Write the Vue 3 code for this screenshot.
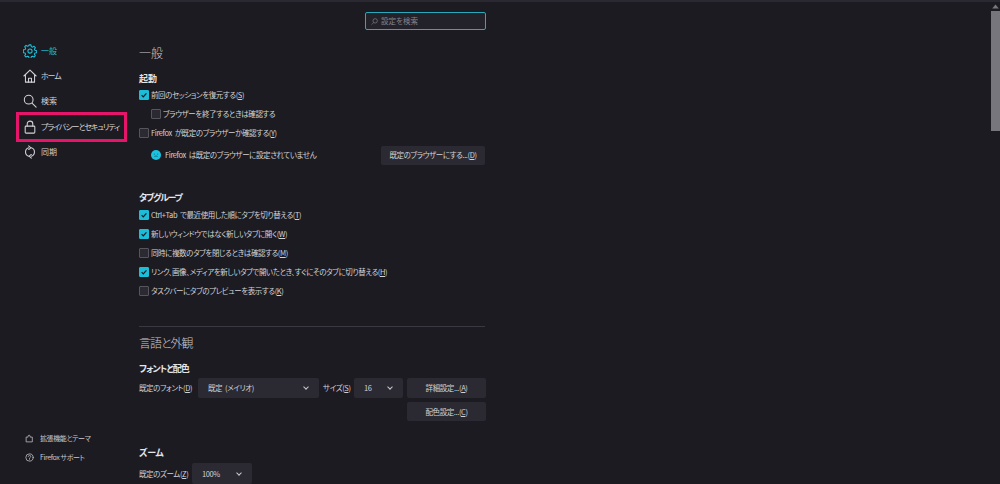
<script setup>
const navItems = [
  { id: 'gear', label: '一般', active: true },
  { id: 'home', label: 'ホーム', tight: true },
  { id: 'search', label: '検索' },
  { id: 'lock', label: 'プライバシーとセキュリティ', boxed: true, tight: true },
  { id: 'sync', label: '同期' }
]
const startup = [
  { label: '前回のセッションを復元する', key: 'S', checked: true },
  { label: 'ブラウザーを終了するときは確認する', checked: false, indent: true },
  { label: 'Firefox が既定のブラウザーか確認する', key: 'Y', checked: false }
]
const tabs = [
  { label: 'Ctrl+Tab で最近使用した順にタブを切り替える', key: 'T', checked: true },
  { label: '新しいウィンドウではなく新しいタブに開く', key: 'W', checked: true },
  { label: '同時に複数のタブを閉じるときは確認する', key: 'M', checked: false },
  { label: 'リンク、画像、メディアを新しいタブで開いたとき、すぐにそのタブに切り替える', key: 'H', checked: true },
  { label: 'タスクバーにタブのプレビューを表示する', key: 'K', checked: false }
]
</script>

<template>
  <div class="page">
    <div class="topstrip"></div>
    <div class="body">
      <aside class="side">
        <nav class="nav">
          <div v-for="n in navItems" :key="n.id" class="nav-item" :class="{ active: n.active, boxed: n.boxed, tight: n.tight }">
            <svg class="nav-icon" viewBox="0 0 16 16" fill="none" stroke="currentColor" stroke-width="1.2" stroke-linecap="round" stroke-linejoin="round">
              <template v-if="n.id === 'gear'">
                <circle cx="8" cy="8" r="2.4" />
                <path d="M6.9 1h2.2l.4 2 1.3.6 1.8-1 1.5 1.6-1.1 1.7.6 1.3 2 .5v2.2l-2 .5-.6 1.3 1.1 1.7-1.5 1.5-1.8-1-1.3.6-.4 2H6.900l-.4-2-1.300-.6-1.800 1-1.500-1.500 1.100-1.700-.6-1.300-2-.5V6.700l2-.5.6-1.300-1.100-1.700 1.500-1.600 1.800 1 1.300-.6z" />
              </template>
              <template v-else-if="n.id === 'home'">
                <path d="M1 8 8 1.200 15 8M2.800 6.500V15h10.400V6.500" />
                <path d="M6.300 15v-4.500h3.400V15" />
              </template>
              <template v-else-if="n.id === 'search'">
                <circle cx="6.500" cy="6.500" r="5" />
                <path d="m10.300 10.300 4.700 4.700" />
              </template>
              <template v-else-if="n.id === 'lock'">
                <rect x="2.500" y="7" width="11" height="8" rx="1" />
                <path d="M4.800 7V4.500a3.200 3.200 0 0 1 6.400 0V7" />
              </template>
              <template v-else>
                <path d="M9.500 3.200a5 5 0 0 1 0 9.600M6.500 12.800a5 5 0 0 1 0-9.600" />
                <path d="M6.500 1 9 3.200 6.500 5.200M9.500 10.800 7 12.800 9.500 15" />
              </template>
            </svg>
            <span class="nav-label">{{ n.label }}</span>
          </div>
        </nav>
        <div class="side-foot">
          <div class="foot-item">
            <svg class="foot-icon" viewBox="0 0 16 16" fill="none" stroke="currentColor" stroke-width="1.300" stroke-linejoin="round">
              <path d="M2 5.500h3.500V4a1.800 1.800 0 0 1 3.600 0v1.500H13V14H2z" />
            </svg>
            <span>拡張機能とテーマ</span>
          </div>
          <div class="foot-item">
            <svg class="foot-icon" viewBox="0 0 16 16" fill="none" stroke="currentColor" stroke-width="1.300" stroke-linecap="round">
              <circle cx="8" cy="8" r="6.500" />
              <path d="M5.800 6.200a2.200 2.200 0 1 1 3.400 1.800c-.8.500-1.200 1-1.200 1.800M8 12v.1" />
            </svg>
            <span>Firefox サポート</span>
          </div>
        </div>
      </aside>

      <main class="main">
        <div class="search-row">
          <div class="search">
            <svg class="search-icon" viewBox="0 0 16 16" fill="none" stroke="currentColor" stroke-width="1.500">
              <circle cx="9.500" cy="6.500" r="5" />
              <path d="M6 10.500 1.500 15" />
            </svg>
            <span>設定を検索</span>
          </div>
        </div>

        <h1 class="title first">一般</h1>
        <h2 class="sub startup">起動</h2>
        <div v-for="c in startup" :key="c.label" class="check" :class="{ indent: c.indent }">
          <span class="box" :class="{ on: c.checked }">
            <svg v-if="c.checked" viewBox="0 0 10 10" fill="none" stroke="#1c1b22" stroke-width="1.600"><path d="m2 5.200 2.100 2.100L8 3" /></svg>
          </span>
          <span>{{ c.label }}<template v-if="c.key">(<u>{{ c.key }}</u>)</template></span>
        </div>
        <div class="default-row">
          <span class="status">
            <svg class="dot" viewBox="0 0 12 12"><circle cx="6" cy="6" r="6" fill="#1ac3e0" /><path d="M3.500 5h1.200M7.300 5h1.200M4 8c1.200-1 2.800-1 4 0" stroke="#17606f" stroke-width="1" fill="none" /></svg>
            Firefox は既定のブラウザーに設定されていません
          </span>
          <button class="btn default-btn">既定のブラウザーにする...(<u>D</u>)</button>
        </div>

        <h2 class="sub tabs">タブグループ</h2>
        <div v-for="c in tabs" :key="c.label" class="check">
          <span class="box" :class="{ on: c.checked }">
            <svg v-if="c.checked" viewBox="0 0 10 10" fill="none" stroke="#1c1b22" stroke-width="1.600"><path d="m2 5.200 2.100 2.100L8 3" /></svg>
          </span>
          <span>{{ c.label }}(<u>{{ c.key }}</u>)</span>
        </div>

        <hr class="rule" />

        <h1 class="title second">言語と外観</h1>
        <h2 class="sub fonts">フォントと配色</h2>
        <div class="font-row">
          <span class="font-label">既定のフォント(<u>D</u>)</span>
          <div class="select font-select"><span>既定 (メイリオ)</span><i class="chev"></i></div>
          <span class="size-label">サイズ(<u>S</u>)</span>
          <div class="select size-select"><span>16</span><i class="chev"></i></div>
          <button class="btn wide">詳細設定...(<u>A</u>)</button>
        </div>
        <div class="color-row"><button class="btn wide">配色設定...(<u>C</u>)</button></div>

        <h2 class="sub zoom">ズーム</h2>
        <div class="zoom-row">
          <span class="zoom-label">既定のズーム(<u>Z</u>)</span>
          <div class="select zoom-select"><span>100%</span><i class="chev"></i></div>
        </div>
      </main>

      <div class="scrollbar">
        <svg class="arrow" viewBox="0 0 8 6"><path d="M4 0.500 8 5.500H0z" fill="#77767c" /></svg>
        <div class="thumb"></div>
      </div>
    </div>
  </div>
</template>

<style>
html, body { margin: 0; background: #1c1b22; }
</style>

<style scoped>
.page {
  width: 1000px;
  height: 484px;
  overflow: hidden;
  display: flex;
  flex-direction: column;
  background: #1c1b22;
  color: #d2d2d6;
  font-family: "Noto Sans CJK JP", "Noto Sans", sans-serif;
  font-size: 8px;
  font-feature-settings: "palt";
  line-height: 12px;
  white-space: nowrap;
}
.topstrip { height: 2px; background: #2a2931; flex: none; }
.body { flex: 1; display: flex; min-height: 0; }

.side {
  width: 139px;
  flex: none;
  display: flex;
  flex-direction: column;
  justify-content: space-between;
  box-sizing: border-box;
  padding: 36px 0 21px 16px;
}
.nav { display: flex; flex-direction: column; width: 111px; }
.nav-item {
  height: 25px;
  display: flex;
  align-items: center;
  gap: 4px;
  padding-left: 7px;
  box-sizing: border-box;
}
.nav-item.active { color: #1fc0da; }
.nav-item.tight { letter-spacing: -1.100px; }
.nav-item.boxed {
  outline: 3px solid #e6156a;
  outline-offset: -3px;
  height: 30px;
  margin: -1.500px 0 -2.500px;
}
.nav-icon { width: 14px; height: 14px; flex: none; }
.side-foot { display: flex; flex-direction: column; gap: 7px; padding-left: 9px; font-size: 7px; letter-spacing: -0.400px; }
.foot-item { display: flex; align-items: center; gap: 6px; height: 12px; color: #c9c9ce; }
.foot-icon { width: 9px; height: 9px; flex: none; }

.main {
  width: 346px;
  flex: none;
  display: flex;
  flex-direction: column;
  font-size: 7.500px;
  letter-spacing: -0.400px;
  word-spacing: 1.500px;
}
.search-row { display: flex; justify-content: flex-end; padding-top: 10px; margin-right: -1px; }
.search {
  width: 121px;
  height: 18px;
  box-sizing: border-box;
  border: 1.500px solid #2aa9ba;
  border-radius: 2px;
  background: #23222b;
  display: flex;
  align-items: center;
  gap: 3px;
  padding-left: 5px;
  color: #85848b;
  letter-spacing: 0;
}
.search-icon { width: 7px; height: 7px; }

h1, h2 { margin: 0; font-weight: 400; }
.title { font-size: 12px; line-height: 16px; font-weight: 300; color: #c8c8cc; letter-spacing: 0; }
.title.first { margin-top: 15px; }
.title.second { margin-top: 8px; letter-spacing: -1px; }
.sub { font-size: 9px; font-weight: 700; line-height: 12px; color: #e4e4e7; letter-spacing: 0; }
.sub.startup { margin-top: 12px; }
.sub.tabs { margin-top: 26px; margin-bottom: 1px; letter-spacing: -1.300px; }
.sub.fonts { margin-top: 12px; margin-bottom: 3px; letter-spacing: -1px; }
.sub.zoom { margin-top: 26px; margin-bottom: 4px; letter-spacing: -0.300px; }

.check { display: flex; align-items: center; gap: 2px; height: 19px; }
.check.indent { padding-left: 12px; }
.box {
  width: 10px;
  height: 10px;
  box-sizing: border-box;
  border: 1px solid #56555c;
  background: #2b2a33;
  border-radius: 1px;
  flex: none;
  display: flex;
}
.box.on { background: #1cbdd8; border-color: #1cbdd8; }
.box svg { width: 8px; height: 8px; }

.default-row { display: flex; align-items: center; justify-content: space-between; height: 22px; margin-top: 2px; padding-left: 12px; }
.status { display: flex; align-items: center; gap: 4px; }
.dot { width: 10px; height: 10px; flex: none; }
.btn {
  font: inherit;
  letter-spacing: inherit;
  font-feature-settings: "palt";
  color: inherit;
  background: #2b2a33;
  border: 0;
  border-radius: 2px;
  padding: 0;
  height: 19px;
  white-space: nowrap;
}
.default-btn { width: 104px; }
.rule { border: 0; height: 1px; background: #3a3941; margin: 26px 0 0; width: 100%; }

.font-row { display: flex; align-items: center; height: 20px; }
.font-label { width: 59px; flex: none; }
.size-label { width: 27px; flex: none; }
.select {
  height: 20px;
  background: #2b2a33;
  border-radius: 2px;
  display: flex;
  align-items: center;
  justify-content: space-between;
  box-sizing: border-box;
  padding: 0 11px 0 10px;
  flex: none;
}
.chev {
  width: 3px;
  height: 3px;
  border-right: 1px solid #c8c8cc;
  border-bottom: 1px solid #c8c8cc;
  transform: rotate(45deg);
  margin-bottom: 2px;
}
.font-select { width: 121px; margin-right: 4px; }
.size-select { width: 49px; margin-left: 4px; }
.wide { width: 79px; margin-left: auto; margin-right: -1px; height: 20px; }
.color-row { display: flex; justify-content: flex-end; margin-top: 4px; }
.color-row .wide { height: 19px; }
.zoom-row { display: flex; align-items: center; height: 21px; }
.zoom-label { width: 53px; flex: none; }
.zoom-select { width: 60px; height: 21px; }

.scrollbar {
  margin-left: auto;
  width: 9px;
  flex: none;
  display: flex;
  flex-direction: column;
  align-items: center;
}
.arrow { width: 7px; height: 5px; margin-top: 2px; flex: none; }
.thumb { width: 9px; height: 120px; margin-top: 2px; background: #77767c; }
</style>
